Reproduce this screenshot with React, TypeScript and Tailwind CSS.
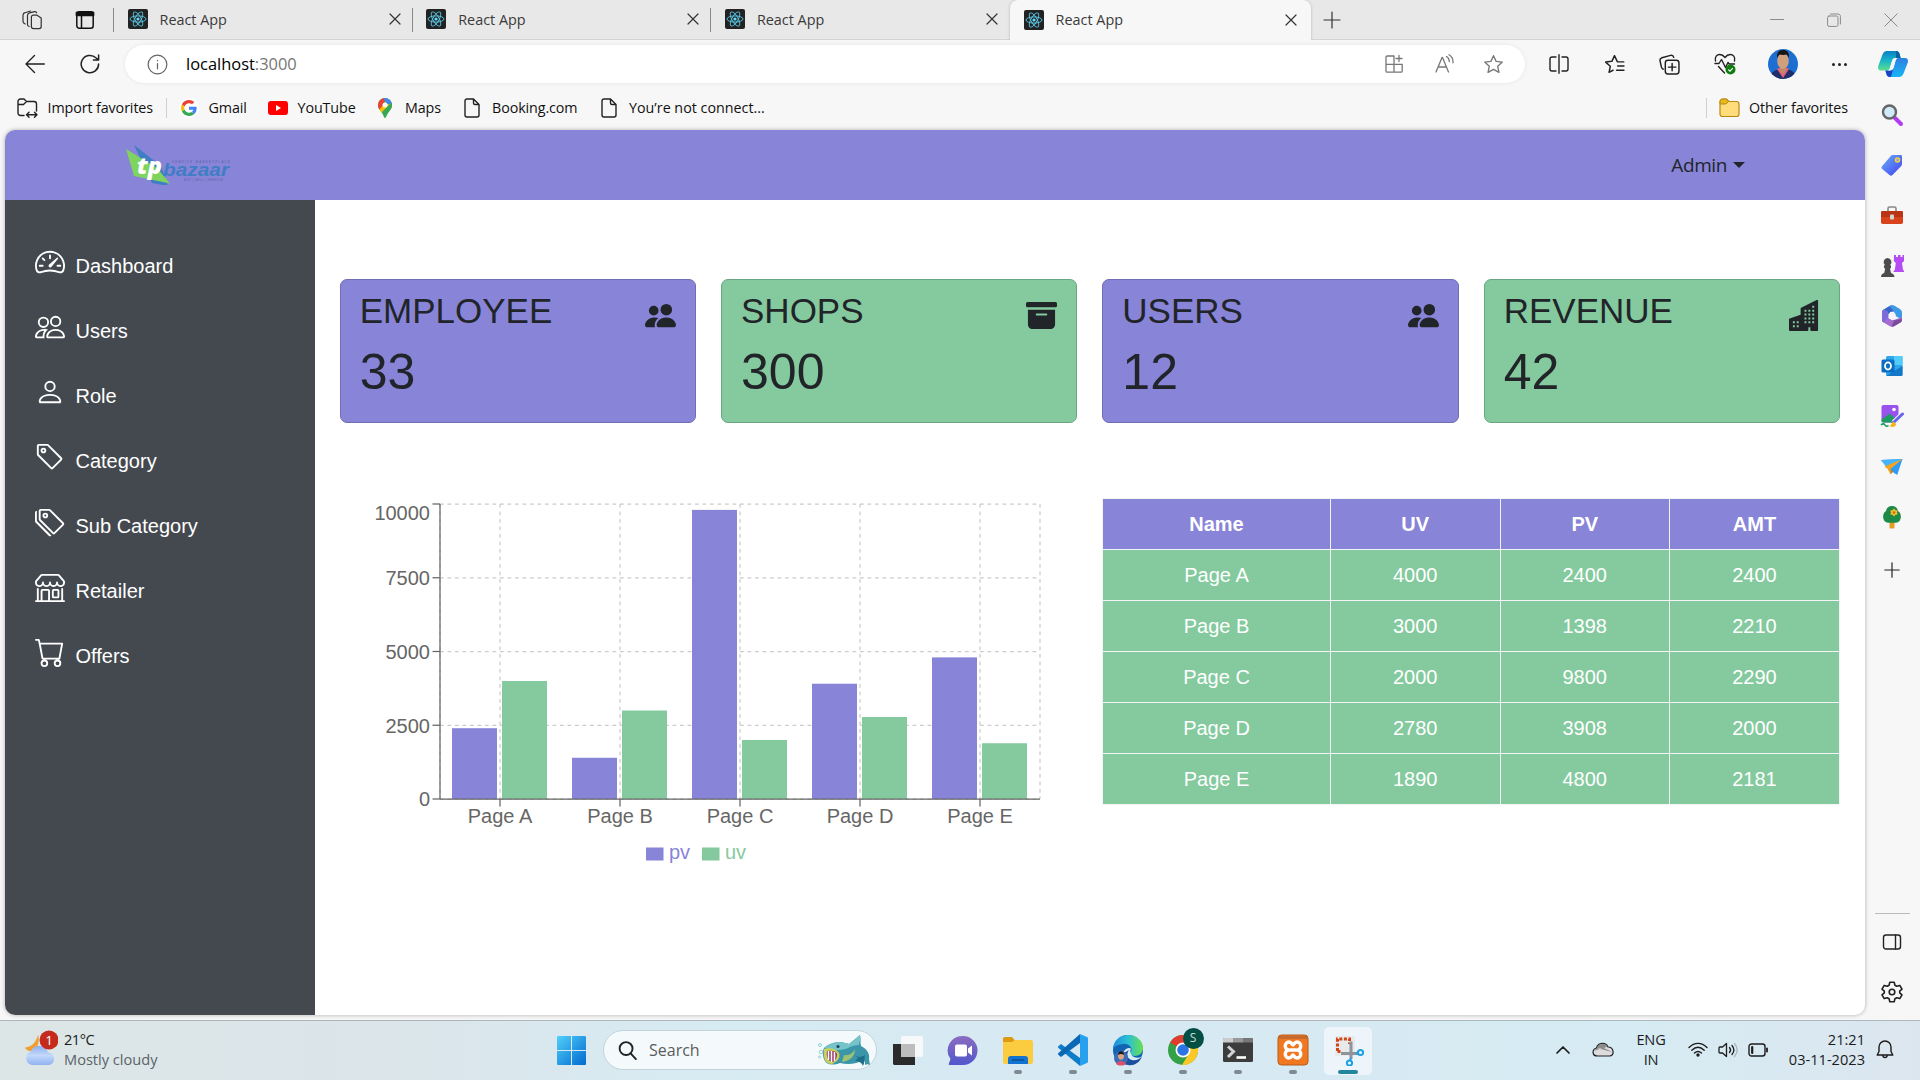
import React from "react";
import {
  BsSpeedometer2,
  BsPeople,
  BsPerson,
  BsTag,
  BsTags,
  BsShop,
  BsCart,
  BsPeopleFill,
  BsFillArchiveFill,
  BsBuildingsFill,
} from "react-icons/bs";

type IconProps = { className?: string; children?: React.ReactNode; vb?: string; sw?: number };

function Line({ className = "", children, vb = "0 0 20 20", sw = 1.3 }: IconProps) {
  return (
    <svg viewBox={vb} className={"shrink-0 " + className} fill="none" stroke="currentColor" strokeWidth={sw} strokeLinecap="round" strokeLinejoin="round">
      {children}
    </svg>
  );
}

function Art({ className = "", children, vb = "0 0 24 24" }: IconProps) {
  return (
    <svg viewBox={vb} className={"shrink-0 " + className} fill="none">
      {children}
    </svg>
  );
}

const STAR = "M10 1.6l2.5 5.4 5.9.7-4.4 4 1.2 5.8L10 14.6l-5.2 2.9L6 11.7l-4.4-4 5.9-.7z";

function ReactLogo() {
  return (
    <Art vb="0 0 20 20" className="size-5">
      <rect width="20" height="20" rx="2" fill="#222" />
      <g stroke="#5ac8e8" strokeWidth="0.9">
        <ellipse cx="10" cy="10" rx="8" ry="3.1" />
        <ellipse cx="10" cy="10" rx="8" ry="3.1" transform="rotate(60 10 10)" />
        <ellipse cx="10" cy="10" rx="8" ry="3.1" transform="rotate(120 10 10)" />
      </g>
      <circle cx="10" cy="10" r="1.6" fill="#61dafb" />
    </Art>
  );
}

function TabBody() {
  return (
    <>
      <ReactLogo />
      <span className="ml-3 w-[229px] whitespace-nowrap text-[14.4px] text-[#3a3a3a]">React App</span>
      <Line vb="0 0 12 12" className="size-3 text-[#333]" sw={1.2}>
        <path d="M1 1l10 10M11 1L1 11" />
      </Line>
    </>
  );
}

function TabStrip() {
  return (
    <div className="flex h-10 items-center border-b border-[#d4d4d4] bg-[#e8e8e8]">
      <Line className="ml-[22px] size-5 text-[#333]" sw={1.2}>
        <path d="M11.500 5.200h3.500L19.200 8v8.600a2 2 0 0 1-2 2h-5.800a2 2 0 0 1-2-2V7.200a2 2 0 0 1 2-2z" />
        <path d="M7.200 16.500c-1-.3-1.700-1-1.700-2V5.600c0-1.500.8-2.300 2-2.700l5-1.300c1-.2 1.900.2 2.200 1.300" />
        <path d="M3.200 14c-1.300-.5-2.200-1.200-2.200-2.400V5.200C1 3.900 1.800 3 3 2.700L8.500 1" />
      </Line>
      <Line className="ml-[33px] size-5 text-[#111]" sw={1.5}>
        <rect x="1.800" y="1.800" width="16.400" height="16.400" rx="2.500" />
        <path d="M2 4.800h16M2 3h16" strokeWidth="3" />
        <path d="M6.500 6v12" />
      </Line>
      <div className="ml-[18px] h-6 w-px bg-[#8a8a8a]" />
      {[0, 1, 2].map((i) => (
        <div key={i} className="flex h-full w-[298.700px] items-center">
          <div className="flex w-full items-center pl-[13.500px]">
            <TabBody />
          </div>
          {i < 2 && <div className="h-6 w-px shrink-0 bg-[#8a8a8a]" />}
        </div>
      ))}
      <div className="-mb-px flex h-10 w-[301px] items-center rounded-t-[8px] bg-[#f7f7f7] pl-[13.500px] shadow-[0_0_3px_rgba(0,0,0,0.22)] [clip-path:inset(0_-4px_0_-4px)]">
        <TabBody />
      </div>
      <Line className="ml-[12px] size-[18px] text-[#333]" vb="0 0 18 18" sw={1.2}>
        <path d="M9 1v16M1 9h16" />
      </Line>
      <div className="ml-auto flex items-center gap-[43px] pr-[22px] text-[#8a8a8a]">
        <Line vb="0 0 14 14" className="w-[14px]" sw={1}>
          <path d="M.5 6.500h13" />
        </Line>
        <Line vb="0 0 14 14" className="w-[14px]" sw={1}>
          <rect x=".6" y="3" width="10.400" height="10.400" rx="1.500" />
          <path d="M3.500 1h7.500c1.500 0 2.400 1 2.400 2.400V11" />
        </Line>
        <Line vb="0 0 14 14" className="w-[14px]" sw={1}>
          <path d="M.8.8l12.400 12.400M13.200.8L.8 13.200" />
        </Line>
      </div>
    </div>
  );
}

function Avatar() {
  return (
    <Art vb="0 0 30 30" className="size-[30px]">
      <clipPath id="av">
        <circle cx="15" cy="15" r="15" />
      </clipPath>
      <g clipPath="url(#av)">
        <rect width="30" height="30" fill="#1c6fd0" />
        <path d="M2 30c0-7 5-10 13-10s13 3 13 10z" fill="#1f2f6b" />
        <path d="M9 20l6 9 6-9-2-1h-8z" fill="#e8607a" />
        <path d="M12 17h6v5l-3 3-3-3z" fill="#c08a68" />
        <ellipse cx="15" cy="12" rx="5.800" ry="7.800" fill="#d0a07c" />
        <path d="M9.200 9c-1-5.500 2-8 5.800-8s6.800 2.500 5.800 8c-.7-2-1.300-3-2.300-3.500-2 .5-5 .5-7 0-1 .5-1.600 1.500-2.300 3.500z" fill="#1a1414" />
      </g>
    </Art>
  );
}

function Copilot() {
  return (
    <Art vb="0 0 30 28" className="h-7 w-[30px]">
      <defs>
        <linearGradient id="cp1" x1="0" y1="0" x2="0" y2="1">
          <stop offset="0" stopColor="#0a7fc4" />
          <stop offset=".5" stopColor="#19b5c9" />
          <stop offset="1" stopColor="#5fe08a" />
        </linearGradient>
        <linearGradient id="cp2" x1="0" y1="0" x2="0" y2="1">
          <stop offset="0" stopColor="#2f7fe0" />
          <stop offset="1" stopColor="#16b6f5" />
        </linearGradient>
      </defs>
      <path d="M9 1h9c2 0 3 1 3.600 3l1 4h-5c-2 0-3 1-3.600 3l-2 7c-.6 2-1.600 2.600-3.500 2.600H3C.6 20.600-.4 18.600.200 16L4.500 4.500C5.500 2 7 1 9 1z" fill="url(#cp1)" />
      <path d="M21 27h-9c-2 0-3-1-3.600-3l-1-3.600H12c2 0 3-1 3.600-3l2-6.800C18.200 8.600 19.200 8 21 8h6c2.500 0 3.400 2 2.800 4.500l-4.300 11C24.500 26 23 27 21 27z" fill="url(#cp2)" />
      <path d="M7.400 20.400H12c1.500 0 2.500-.6 3.200-1.800L13 27h-1c-2 0-3-1-3.600-3z" fill="#1b44c4" />
      <path d="M18 1c2 0 3 1 3.600 3l1 4H18z" fill="#0b5f9e" />
      <path d="M14 11c.6-2 1.600-3 3.600-3h3.400c-1.800 0-2.800.6-3.400 2.600l-2 6.800c-.6 2-1.600 3-3.600 3H9c1.500 0 2.400-.8 3-2.600z" fill="#f2f9fc" />
    </Art>
  );
}

function AddressRow() {
  return (
    <div className="flex h-[46px] items-center pt-0.5">
      <Line vb="0 0 20 20" className="ml-[25px] size-5 text-[#222]" sw={1.4}>
        <path d="M19.300 10H1M9.500 1.500L1 10l8.500 8.500" />
      </Line>
      <Line vb="0 0 20 20" className="ml-[35px] size-5 text-[#222]" sw={1.500}>
        <path d="M18.600 10a8.700 8.700 0 1 1-2.700-6.200L18 5.600M18.600 1v5h-5.200" />
      </Line>
      <div className="ml-[25px] flex h-[38px] w-[1400px] items-center rounded-full bg-white shadow-[0_0_4px_rgba(0,0,0,0.08)]">
        <Line vb="0 0 22 22" className="ml-[22px] size-[21px] text-[#666]" sw={1.300}>
          <circle cx="11" cy="11" r="9.800" />
          <path d="M11 10v5.500M11 6.600v.4" />
        </Line>
        <span className="ml-[18px] w-[1180px] whitespace-nowrap text-[16.450px] leading-none text-black">
          localhost<span className="text-[#767676]">:3000</span>
        </span>
        <Line className="ml-[18px] size-5 text-[#777]" sw={1.300}>
          <path d="M10 2H3.200C2.500 2 2 2.500 2 3.200V17c0 .7.500 1.200 1.200 1.200H17c.7 0 1.200-.5 1.200-1.200v-6.500M2 10.300h16M10 2v16M15 1.500v6M12 4.500h6" />
        </Line>
        <Line className="ml-[31px] size-5 text-[#777]" sw={1.300}>
          <path d="M1 18L7 3.500h.5L13.500 18M3 13h8.500M11.500 2.500c2 1.200 2.800 2.800 2.800 5M14 .8c3 1.700 4.300 4.500 4 8" />
        </Line>
        <Line className="ml-[28px] size-[21px] text-[#777]" sw={1.300}>
          <path d={STAR} />
        </Line>
      </div>
      <Line className="ml-[24px] size-5 text-[#222]" sw={1.400}>
        <path d="M7 3H3C1.800 3 1 3.800 1 5v10c0 1.200.8 2 2 2h4M13 3h4c1.200 0 2 .8 2 2v10c0 1.200-.8 2-2 2h-4M10 .8v18.400" />
      </Line>
      <Line className="ml-[35px] size-[21px] text-[#222]" sw={1.400}>
        <path d="M18.800 7.500h-6L10 1.600 7.500 7l-5.900.7 4.400 4-1.200 5.800 3.800-2M13 11.500h6M12 15.500h7" />
      </Line>
      <Line className="ml-[34px] size-[21px] text-[#222]" sw={1.400}>
        <rect x="6" y="6" width="13" height="13" rx="2.500" />
        <path d="M12.500 9v7M9 12.500h7M4 14.500C3 14 2.600 13.500 2.300 12.500L1 6.500c-.3-1.500.5-2.600 1.800-3L11 1.300c1.500-.3 2.700.4 3 1.900" />
      </Line>
      <Art vb="0 0 22 22" className="ml-[34px] size-[22px]">
        <g stroke="#222" strokeWidth="1.400" strokeLinecap="round" strokeLinejoin="round">
          <path d="M1.500 8C.5 3.500 3 1.500 5.800 1.500c2.200 0 3.700 1 5.200 3 1.500-2 3-3 5.200-3 2.800 0 5.300 2 4.300 6.500M4.500 13.500l6 6.500" />
          <path d="M1 10.500h4l2.500-4 4 8 2.500-5 1.200 1.500h5.300" />
        </g>
        <circle cx="16.500" cy="16.500" r="5" fill="#107c10" />
        <path d="M14.300 16.600l1.700 1.600 2.800-3" stroke="#fff" strokeWidth="1.200" />
      </Art>
      <div className="ml-[32px]">
        <Avatar />
      </div>
      <div className="ml-[34px] flex gap-[3px]">
        <i className="size-[3px] rounded-full bg-[#222]" />
        <i className="size-[3px] rounded-full bg-[#222]" />
        <i className="size-[3px] rounded-full bg-[#222]" />
      </div>
      <div className="ml-[31px]">
        <Copilot />
      </div>
    </div>
  );
}

function FileIcon({ className }: { className: string }) {
  return (
    <Line vb="0 0 16 20" className={"h-5 w-4 text-[#222] " + className} sw={1.400}>
      <path d="M9.500 1H3C1.800 1 1 1.800 1 3v14c0 1.200.8 2 2 2h10c1.200 0 2-.8 2-2V6.500zM9.500 1v4c0 1 .5 1.500 1.500 1.500h4" />
    </Line>
  );
}

function FavoritesBar() {
  const t = "whitespace-nowrap text-[14.300px] tracking-[-0.1px] text-[#111]";
  return (
    <div className="flex h-[44px] items-center">
      <Line vb="0 0 21 20" className="ml-[17px] h-5 w-[21px] text-[#222]" sw={1.400}>
        <path d="M7 17.500H3.500C2 17.500 1 16.500 1 15V3.500C1 2 2 1 3.500 1H7l2.500 2.500H17c1.500 0 2.500 1 2.500 2.500v7M1 6.500h5.500L9.500 3.500" />
        <path d="M9.500 16.800h10.500M12 14.300l-2.500 2.500 2.500 2.500M17.500 14.300l2.500 2.500-2.500 2.500" />
      </Line>
      <span className={"ml-[9.500px] w-[105px] " + t}>Import favorites</span>
      <div className="ml-[13.500px] h-5 w-px bg-[#cfcfcf]" />
      <div className="ml-[12px] flex size-5 items-center justify-center rounded-full bg-white">
        <Art vb="0 0 48 48" className="size-4">
          <path fill="#EA4335" d="M24 9.500c3.540 0 6.710 1.220 9.210 3.600l6.850-6.850C35.900 2.380 30.470 0 24 0 14.620 0 6.510 5.380 2.560 13.220l7.980 6.190C12.430 13.720 17.740 9.500 24 9.500z" />
          <path fill="#4285F4" d="M46.980 24.550c0-1.570-.15-3.090-.38-4.550H24v9.020h12.940c-.58 2.960-2.260 5.480-4.780 7.180l7.730 6c4.510-4.180 7.090-10.360 7.090-17.650z" />
          <path fill="#FBBC05" d="M10.530 28.590c-.48-1.450-.76-2.990-.76-4.590s.27-3.140.76-4.590l-7.980-6.190C.92 16.460 0 20.120 0 24c0 3.880.92 7.540 2.560 10.780l7.970-6.190z" />
          <path fill="#34A853" d="M24 48c6.480 0 11.930-2.130 15.890-5.810l-7.730-6c-2.150 1.450-4.920 2.300-8.160 2.300-6.260 0-11.570-4.220-13.470-9.910l-7.980 6.190C6.510 42.620 14.620 48 24 48z" />
        </Art>
      </div>
      <span className={"ml-[9.500px] w-[50px] " + t}>Gmail</span>
      <Art vb="0 0 20 14" className="ml-[9px] h-[14px] w-5">
        <rect width="20" height="14" rx="3" fill="#f00" />
        <path d="M8 4l5 3-5 3z" fill="#fff" />
      </Art>
      <span className={"ml-[10px] w-[58px] " + t}>YouTube</span>
      <Art vb="0 0 14 20" className="ml-[22px] h-5 w-[14px]">
        <clipPath id="pin">
          <path d="M7 0a7 7 0 0 0-7 7c0 3 1.500 4.500 3 6.500C5 16 5.500 17.500 6 19c.3 1 1.700 1 2 0 .5-1.500 1-3 3-5.500 1.500-2 3-3.500 3-6.500a7 7 0 0 0-7-7z" />
        </clipPath>
        <g clipPath="url(#pin)">
          <rect width="14" height="20" fill="#34a853" />
          <path d="M0 12L14-3v10L2 17z" fill="#fbbc04" />
          <path d="M0 0h7l-1 6-5 6-3-5z" fill="#ea4335" />
          <path d="M4 -2h12v9L9 6z" fill="#4285f4" />
          <path d="M14 4v9l-7 8-3-7z" fill="#34a853" />
        </g>
        <circle cx="7" cy="7" r="2.500" fill="#fff" />
      </Art>
      <span className={"ml-[13.500px] w-[38px] " + t}>Maps</span>
      <FileIcon className="ml-[21px]" />
      <span className={"ml-[12px] w-[88px] " + t}>Booking.com</span>
      <FileIcon className="ml-[21px]" />
      <span className="ml-[12px] w-[140px] whitespace-nowrap text-[14.300px] text-[#111]">You’re not connect...</span>
      <div className="ml-auto h-5 w-px bg-[#cfcfcf]" />
      <Art vb="0 0 21 20" className="ml-[12px] h-5 w-[21px]">
        <path d="M1 4c0-1.700 1-3 3-3h3.500L10 3.500h7.500c1.500 0 2.500 1 2.500 2.500v10c0 1.500-1 2.500-2.500 2.500h-14C2 18.500 1 17.500 1 16z" fill="#ffdc7c" stroke="#b98a10" strokeWidth="1.200" />
        <path d="M1 6V4c0-1.700 1-3 3-3h3L9.500 3.500 7 6z" fill="#e9b91c" stroke="#b98a10" strokeWidth="1" />
      </Art>
      <span className={"mr-[72px] ml-[9px] w-[99px] " + t}>Other favorites</span>
    </div>
  );
}

function Logo() {
  return (
    <Art vb="0 0 106 40" className="h-10 w-[106px]">
      <path d="M8 0l27 21 7 20-16-3z" fill="#3f7ec4" />
      <path d="M0 4l31 19 13 15.500L8 31z" fill="#7ed45c" />
      <text x="11" y="29" fontFamily="Open Sans" fontWeight="800" fontStyle="italic" fontSize="23" textLength="25" lengthAdjust="spacingAndGlyphs" fill="#fff">tp</text>
      <text x="37" y="31" fontFamily="Liberation Sans" fontWeight="700" fontStyle="italic" fontSize="17.500" textLength="66" lengthAdjust="spacingAndGlyphs" fill="#3f7ec4">bazaar</text>
      <text x="46" y="18" fontFamily="Liberation Sans" fontSize="3" textLength="58" fill="#5d62a8">SERVICE MARKETPLACE</text>
      <text x="58" y="35.500" fontFamily="Liberation Sans" fontSize="3" textLength="39" fill="#5d62a8">BUY | SELL | SERVICE</text>
    </Art>
  );
}

const NAV = [
  { label: "Dashboard", Icon: BsSpeedometer2 },
  { label: "Users", Icon: BsPeople },
  { label: "Role", Icon: BsPerson },
  { label: "Category", Icon: BsTag },
  { label: "Sub Category", Icon: BsTags },
  { label: "Retailer", Icon: BsShop },
  { label: "Offers", Icon: BsCart },
];

const STATS = [
  { label: "EMPLOYEE", value: "33", Icon: BsPeopleFill, bg: "bg-[#8884d8] border-[#706db2]" },
  { label: "SHOPS", value: "300", Icon: BsFillArchiveFill, bg: "bg-[#84ca9e] border-[#6ba682]" },
  { label: "USERS", value: "12", Icon: BsPeopleFill, bg: "bg-[#8884d8] border-[#706db2]" },
  { label: "REVENUE", value: "42", Icon: BsBuildingsFill, bg: "bg-[#84ca9e] border-[#6ba682]" },
];

const DATA = [
  { name: "Page A", uv: 4000, pv: 2400, amt: 2400 },
  { name: "Page B", uv: 3000, pv: 1398, amt: 2210 },
  { name: "Page C", uv: 2000, pv: 9800, amt: 2290 },
  { name: "Page D", uv: 2780, pv: 3908, amt: 2000 },
  { name: "Page E", uv: 1890, pv: 4800, amt: 2181 },
];

const TICKS = [
  { v: 0, ty: 308 },
  { v: 2500, ty: 235 },
  { v: 5000, ty: 161 },
  { v: 7500, ty: 87 },
  { v: 10000, ty: 22 },
];

function Chart() {
  const x0 = 100;
  const y0 = 301;
  const h = 295;
  const dash = "3.75 3.75";
  return (
    <svg width="738" height="375" viewBox="0 0 738 375" fontFamily="Liberation Sans" fontSize="20" fill="#666" className="block">
      <g stroke="#ccc" strokeWidth="1.250" strokeDasharray={dash}>
        {TICKS.map((t) => (
          <path key={t.v} d={`M${x0} ${y0 - (t.v / 10000) * h}h600`} />
        ))}
        {[0, 60, 180, 300, 420, 540, 600].map((x) => (
          <path key={x} d={`M${x0 + x} 6v${h}`} />
        ))}
      </g>
      {DATA.map((d, i) => (
        <g key={d.name}>
          <rect x={x0 + i * 120 + 12} y={y0 - (d.pv / 10000) * h} width="45" height={(d.pv / 10000) * h} fill="#8884d8" />
          <rect x={x0 + i * 120 + 62} y={y0 - (d.uv / 10000) * h} width="45" height={(d.uv / 10000) * h} fill="#84ca9e" />
          <path d={`M${x0 + 60 + i * 120} ${y0}v7.500`} stroke="#666" strokeWidth="1.250" />
          <text x={x0 + 60 + i * 120} y="325" textAnchor="middle">{d.name}</text>
        </g>
      ))}
      <path d={`M${x0} 6v${h}M${x0} ${y0}h600`} stroke="#666" strokeWidth="1.250" />
      {TICKS.map((t) => (
        <g key={t.v}>
          <path d={`M${x0 - 7.5} ${y0 - (t.v / 10000) * h}h7.500`} stroke="#666" strokeWidth="1.250" />
          <text x="90" y={t.ty} textAnchor="end">{t.v}</text>
        </g>
      ))}
      <rect x="306" y="349.500" width="17.500" height="13" fill="#8884d8" />
      <text x="329" y="361" fill="#8884d8">pv</text>
      <rect x="362" y="349.500" width="17.500" height="13" fill="#84ca9e" />
      <text x="385" y="361" fill="#84ca9e">uv</text>
    </svg>
  );
}

function DataTable() {
  const cell = "border border-[#f3f4f6] h-[51px] p-0 text-center align-middle";
  return (
    <table className="w-[738px] table-fixed border-collapse text-[20px] leading-[30px] text-white">
      <colgroup>
        <col className="w-[228px]" />
        <col className="w-[169.500px]" />
        <col className="w-[169.500px]" />
        <col />
      </colgroup>
      <thead>
        <tr className="bg-[#8884d8]">
          {["Name", "UV", "PV", "AMT"].map((h) => (
            <th key={h} className={cell + " font-bold"}>{h}</th>
          ))}
        </tr>
      </thead>
      <tbody>
        {DATA.map((d) => (
          <tr key={d.name} className="bg-[#84ca9e]">
            <td className={cell}>{d.name}</td>
            <td className={cell}>{d.uv}</td>
            <td className={cell}>{d.pv}</td>
            <td className={cell}>{d.amt}</td>
          </tr>
        ))}
      </tbody>
    </table>
  );
}

function WebPage() {
  return (
    <div className="flex h-[885px] w-[1860px] flex-col overflow-hidden rounded-[10px] bg-white font-['Liberation_Sans',sans-serif] shadow-[0_0_4px_rgba(0,0,0,0.3)]">
      <header className="flex h-[70px] shrink-0 items-center justify-between bg-[#8884d8] pr-[120px] pl-[121px]">
        <Logo />
        <div className="flex items-center gap-[6px] font-['Open_Sans',sans-serif] text-[19px] tracking-[-0.400px] text-[#212529]">
          Admin
          <i className="size-0 border-x-[6px] border-t-[6px] border-x-transparent border-t-[#212529]" />
        </div>
      </header>
      <div className="flex min-h-0 flex-1">
        <nav className="w-[310px] bg-[#444950] pt-[32px] pl-[30px] text-[20px] text-white">
          {NAV.map(({ label, Icon }) => (
            <div key={label} className="flex h-[65px] items-center">
              <Icon className="-mt-[6px] size-[30px]" />
              <span className="mt-0.5 ml-[10.500px]">{label}</span>
            </div>
          ))}
        </nav>
        <main className="flex-1 pt-[79px] pr-[25px] pl-[24.700px]">
          <div className="grid grid-cols-4 gap-[25px] text-[#212529]">
            {STATS.map(({ label, value, Icon, bg }) => (
              <section key={label} className={"h-[144px] rounded-[7px] border px-[19px] pt-[10px] " + bg}>
                <div className="flex justify-between">
                  <h3 className="text-[35px] leading-[42px]">{label}</h3>
                  <Icon className="mt-[10px] size-[31px]" />
                </div>
                <p className="mt-[10px] text-[50px] leading-[60px]">{value}</p>
              </section>
            ))}
          </div>
          <div className="mt-[75px] flex items-start justify-between">
            <Chart />
            <DataTable />
          </div>
        </main>
      </div>
    </div>
  );
}

function EdgeSidebar() {
  const c = "size-6";
  return (
    <aside className="flex w-[55px] flex-col items-center pr-px">
      <div className="-mt-[27px] flex flex-col items-center gap-[26.200px]">
        <Art className={c}>
          <path d="M15 15l6 6" stroke="#b43cf0" strokeWidth="4" strokeLinecap="round" />
          <circle cx="9.500" cy="9" r="6.500" fill="#cfeafb" stroke="#666" strokeWidth="2.400" />
        </Art>
        <Art className={c}>
          <defs>
            <linearGradient id="tg" x1="0" y1="0" x2="1" y2="1">
              <stop offset="0" stopColor="#6ab0f8" />
              <stop offset="1" stopColor="#4040f0" />
            </linearGradient>
          </defs>
          <path d="M13 2h7.500c1 0 1.500.5 1.500 1.500V11c0 .8-.3 1.300-.8 1.900L12.500 22c-1 1-2 1-3 0L2.200 16c-1-1-.9-2 0-3l8.600-10C11.500 2.300 12 2 13 2z" fill="url(#tg)" />
          <circle cx="17.500" cy="7" r="2" fill="#7d9ff0" stroke="#fbd23c" strokeWidth="1.500" />
        </Art>
        <Art className={c}>
          <path d="M8 8V5.500C8 4.600 8.500 4 9.500 4h5c1 0 1.500.6 1.500 1.500V8" stroke="#888" strokeWidth="1.600" />
          <rect x="1" y="8" width="22" height="13" rx="1.800" fill="#d8431c" />
          <path d="M1 9.500C1 8.500 1.800 8 2.500 8h19c.8 0 1.500.5 1.500 1.500V14H1z" fill="#b93414" />
          <rect x="10" y="11.500" width="4" height="5" rx="1" fill="#d4d4d4" />
        </Art>
        <Art className={c}>
          <path d="M14 1h2v2h2V1h2.500v2h2V1H24v6l-2 2 1 7c1 .5 1.300 1 1.300 2H13.500c0-1 .3-1.500 1.300-2l1-7-2-2z" fill="#b44cf4" />
          <path d="M7.500 4a4 4 0 0 1 2.800 6.800L11 12v2l-1 .5 1 4.500c1.500.7 3.500 1.500 3.500 4H1c0-2.500 1.500-3.300 3.200-4l1-4.500L4 14v-2l.8-1.200A4 4 0 0 1 7.500 4z" fill="#4c4c4c" />
        </Art>
        <Art className={c}>
          <path d="M9.500 2c1.500-1 3.500-1 5 0l5.500 3.200-1 5.800-5-3.500-4 .5-1.500 6.500L2 17V8.500C2 7 2.500 6 4 5.200z" fill="#3568c8" />
          <path d="M9.500 2c1.500-1 3.500-1 5 0l5.500 3.200c1.500.8 2 1.800 2 3.300v7L15.500 12 14 7.500z" fill="#3f9ae6" />
          <path d="M2 9l6-1.500L8.500 14l5.500 2 8-3v2.500c0 1.500-.5 2.500-2 3.300L14.500 22c-1.500 1-3.500 1-5 0L4 18.800C2.500 18 2 17 2 15.500z" fill="#a46cd0" />
          <path d="M2 8.500c0-1.500.5-2.500 2-3.300L8 8v6l-4.500 4.500C2.500 18 2 17 2 15.500z" fill="#7a6cdc" />
          <path d="M14 16.500l8-1.500c0 2-.5 3-2 3.800L14.500 22c-1 .7-2 .8-3 .7z" fill="#7c4a9c" />
          <path d="M12 8l3.600 2v4L12 16.200 8.400 14v-4z" fill="#f7f7f7" />
        </Art>
        <Art className={c}>
          <rect x="6" y="2" width="16.500" height="20" rx="1.500" fill="#2ea8ea" />
          <path d="M14 2h8.500v9H14z" fill="#52ccfb" />
          <path d="M6 22l16.500-10v8.500c0 1-.6 1.500-1.500 1.500z" fill="#1478c8" />
          <rect x="1.500" y="5.500" width="13" height="13" rx="1.500" fill="#0b6cc4" />
          <ellipse cx="8" cy="12" rx="3" ry="3.600" stroke="#fff" strokeWidth="1.800" />
        </Art>
        <Art className={c}>
          <rect x="1.500" y="1" width="17" height="17.500" rx="2" fill="#9a52ec" />
          <path d="M1.500 15.500l8-6 7 6-2 3H3.500c-1.500 0-2-1-2-2z" fill="#1c9c64" />
          <circle cx="14" cy="5.500" r="1.800" fill="#fff" />
          <path d="M13.500 18.500L22.500 10" stroke="#f7f7f7" strokeWidth="5" />
          <path d="M13.500 18.500L22.500 10" stroke="#6464f0" strokeWidth="3" strokeLinecap="round" />
          <path d="M9.500 22c2-.5 2-3.500 4-4.500l2.600 2.600c0 3-4 4-6.600 1.900z" fill="#f5b21c" />
          <path d="M1 21c2-2 3.500-1 4 0s2 1.800 3.500.5" stroke="#1c9c64" strokeWidth="1.600" />
        </Art>
        <Art className={c}>
          <path d="M1 6l21.500-1-5.300 16-6-4z" fill="#2e9cf4" />
          <path d="M1 6l21.500-1L7 14z" fill="#46b4fa" />
          <path d="M4.500 12.500L22.500 5 10.500 15v5.500L7.500 14.800z" fill="#f3a41e" />
          <path d="M10.500 15.500l2.800 2-2.800 3z" fill="#c87812" />
        </Art>
        <Art className={c}>
          <rect x="9.500" y="16" width="5" height="7.500" rx=".8" fill="#e89c28" />
          <path d="M12 1c4 0 5.500 2.500 6 5 2.500 1.500 3.500 5 2.500 8-.8 2.500-2.500 3.700-5 3.700h-7c-2.500 0-4.200-1.200-5-3.700-1-3 0-6.500 2.500-8 .5-2.500 2-5 6-5z" fill="#1e8a48" />
          <path d="M14 3.500l1.500 1.800 2.200.2-.7 2 .7 2-2.200.3L14 11.500l-1.500-1.700-2.200-.3.700-2-.7-2 2.200-.2z" fill="#f4c02c" />
          <circle cx="14" cy="7.500" r="1.300" fill="#d8661c" />
        </Art>
      </div>
      <Line vb="0 0 16 16" className="mt-[33px] size-4 text-[#222]" sw={1.200}>
        <path d="M8 .8v14.400M.8 8h14.400" />
      </Line>
      <div className="mt-auto h-px w-[35px] bg-[#bbb]" />
      <Line className="mt-[18px] size-5 text-[#222]" sw={1.400}>
        <rect x="1.500" y="3" width="17" height="14" rx="2.500" />
        <path d="M13.500 3v14" />
      </Line>
      <Line vb="0 0 24 24" className="mt-[28px] mb-[16px] size-6 text-[#222]" sw={1.600}>
        <path d="M9.800 2.200h4.400l.7 3 1.900 1.100 3-.9 2.200 3.700-2.300 2.100v1.600l2.300 2.100-2.200 3.700-3-.9-1.900 1.100-.7 3H9.800l-.7-3-1.900-1.100-3 .9L2 14.900l2.300-2.100v-1.600L2 9.100l2.200-3.700 3 .9 1.900-1.100z" />
        <circle cx="12" cy="12" r="2.800" />
      </Line>
    </aside>
  );
}

function TaskIcon({ children, mark = true }: { children: React.ReactNode; mark?: boolean }) {
  return (
    <div className="flex h-12 w-[55px] flex-col items-center pt-[7px]">
      {children}
      {mark && <i className="mt-1 h-1 w-2 rounded-full bg-[#7e8a90]" />}
    </div>
  );
}

function Taskbar() {
  const k = "size-8";
  return (
    <footer className="flex h-[60px] items-center border-t border-[#adb8be] bg-[linear-gradient(90deg,#dde6e6_0%,#dbe5ea_20%,#d7ebf3_38%,#d7e9f2_60%,#d6ebf3_85%,#dce6ef_100%)] text-[14.600px] text-[#1c1c1c]">
      <Art vb="0 0 34 36" className="-mt-[5px] ml-[24px] h-9 w-[34px]">
        <defs>
          <linearGradient id="cl" x1="0" y1="0" x2="0" y2="1">
            <stop offset="0" stopColor="#8fb0ee" />
            <stop offset=".5" stopColor="#c3d8fb" />
            <stop offset="1" stopColor="#8fb2f0" />
          </linearGradient>
        </defs>
        <path d="M14 5c2 5 0 13-4 16H5c-2-1-3.500-2-4-3.500C8 17 12 12 14 5z" fill="#f0a030" />
        <path d="M8 35a7 7 0 0 1-1-13.500C8 18 11 16 15 16s8 2 9 6.500A6.300 6.300 0 0 1 25 35z" fill="url(#cl)" />
        <circle cx="25" cy="10" r="9.500" fill="#c42b1c" />
        <text x="25" y="15" textAnchor="middle" fontFamily="Open Sans" fontSize="13.500" fill="#fff">1</text>
      </Art>
      <div className="-mt-1 ml-[6px] w-[110px] leading-5 whitespace-nowrap">
        <div className="tracking-[-0.500px]">21°C</div>
        <div className="text-[#5a6368]">Mostly cloudy</div>
      </div>
      <Art vb="0 0 29 29" className="ml-[383px] size-[29px]">
        <defs>
          <linearGradient id="win" x1="0" y1="0" x2="1" y2="1">
            <stop offset="0" stopColor="#4fd0fa" />
            <stop offset="1" stopColor="#0369cf" />
          </linearGradient>
        </defs>
        <path d="M1.500 0H14v14H0V1.500C0 .5.500 0 1.500 0zM15 0h12.500c1 0 1.500.5 1.500 1.500V14H15zM0 15h14v14H1.500C.5 29 0 28.500 0 27.500zM15 15h14v12.500c0 1-.5 1.500-1.500 1.500H15z" fill="url(#win)" />
      </Art>
      <div className="-mt-px ml-[17px] flex h-[40px] w-[274px] items-center rounded-full border border-[#c3d2dc] bg-[#f4f9fc] text-[16px] text-[#5c5c5c]">
        <Line className="ml-[14px] size-[19px] text-[#222]" sw={2}>
          <circle cx="8.500" cy="8" r="6.800" />
          <path d="M13.300 13l5.500 6" />
        </Line>
        <span className="ml-[12px] w-[169px]">Search</span>
        <Art vb="0 0 54 32" className="h-8 w-[54px]">
          <path d="M6 14C12 8 22 7 31 10l11-9c1 4 0 8 1 11 6 3 9 8 8 13l1 6c-2-1-3-1-5 0 0-3 0-4-2-5-6 4-15 5-23 3-8 3-14 1-15-2-2-3-3-9-1-13z" fill="#3b96aa" />
          <path d="M6 14c7-6 16-7 25-4l11-9c1 4-1 8-1 10-8 0-12 5-20 5-5 0-9 0-15-2z" fill="#74c4c8" />
          <path d="M6 15c6-2 13 0 15 4 2 6-3 9-7 11-7 0-9-6-8-15z" fill="#c9d35a" />
          <path d="M9 17c4-1 10 0 10 3 0 5-2 8-5 8-4-1-6-5-5-11z" fill="#9c3a6c" />
          <path d="M10.500 17v9M13.500 17v11M16.500 18v9" stroke="#fff" strokeWidth="1.500" />
          <circle cx="20" cy="12.500" r="1.600" fill="#23406a" />
          <path d="M26 21c5 1 9-2 11-6 0 8-6 12-13 13" fill="#c9d35a" opacity=".7" />
          <path d="M36 21c4 3 8 2 11 0-1 4 0 7-2 11-1-3-4-5-8-5l3-3z" fill="#1d6f88" />
          <circle cx="2" cy="11" r="1.500" stroke="#8fd0e0" />
          <circle cx="3" cy="18" r="1.800" stroke="#8fd0e0" />
          <circle cx="1.500" cy="23" r="1" stroke="#8fd0e0" />
        </Art>
      </div>
      <div className="ml-[3px] flex items-center">
        <TaskIcon mark={false}>
          <Art vb="0 0 32 32" className={k}>
            <path d="M1 10h22v21H3c-1.500 0-2-.5-2-2z" fill="#2b2b2b" />
            <rect x="9" y="2" width="22" height="21" rx="1.500" fill="#fafafa" fillOpacity=".9" />
            <path d="M9 10h14v13H9z" fill="#bdbdbd" />
          </Art>
        </TaskIcon>
        <TaskIcon mark={false}>
          <Art vb="0 0 32 32" className={k}>
            <defs>
              <linearGradient id="ch" x1="0" y1="0" x2="0" y2="1">
                <stop offset="0" stopColor="#8c6cc0" />
                <stop offset="1" stopColor="#5058cc" />
              </linearGradient>
            </defs>
            <path d="M16 2a14.500 14.500 0 1 1 0 29H2.500c-.8 0-1-.6-.7-1.300L3.500 25A14.500 14.500 0 0 1 16 2z" fill="url(#ch)" />
            <rect x="8" y="10.500" width="12" height="12" rx="2" fill="#fff" />
            <path d="M21 14.500l4-3v10l-4-3z" fill="#fff" />
          </Art>
        </TaskIcon>
        <TaskIcon>
          <Art vb="0 0 32 32" className={k}>
            <path d="M1 5c0-1.300.7-2 2-2h7l3 3.500-3 3H1z" fill="#dd9a10" />
            <path d="M1 8h9l3-2h16c1.300 0 2 .7 2 2v20c0 1.300-.7 2-2 2H3c-1.300 0-2-.7-2-2z" fill="#fccc40" />
            <path d="M6 30v-5c0-1.800 1-3 3-3h14c2 0 3 1.200 3 3v5z" fill="#1273d0" />
            <path d="M10 26h12" stroke="#0b4d94" strokeWidth="1.500" />
          </Art>
        </TaskIcon>
        <TaskIcon>
          <Art vb="0 0 32 32" className={k}>
            <path d="M1 12.500l3-2.500L23 24v8L1.500 14c-.5-.5-.8-1-.5-1.500z" fill="#0f7cc8" />
            <path d="M1 20.500L4 23 23 9V0L1.500 19c-.5.500-.8 1-.5 1.500z" fill="#0a68b4" />
            <path d="M23 0l7 3c.8.400 1 1 1 1.800v22.400c0 .8-.2 1.400-1 1.800l-7 3z" fill="#28a0f0" />
          </Art>
        </TaskIcon>
        <TaskIcon>
          <Art vb="0 0 32 32" className={k}>
            <defs>
              <linearGradient id="ed" x1="0" y1="0" x2="1" y2="0">
                <stop offset="0" stopColor="#1c8cdc" />
                <stop offset=".5" stopColor="#2cc0d4" />
                <stop offset="1" stopColor="#6ae04c" />
              </linearGradient>
            </defs>
            <circle cx="16" cy="16" r="15" fill="#1264b4" />
            <path d="M1 15C2 6 8 1 16 1c9 0 15 6 15 13 0 5-4 8-8 8-3 0-5-1-5-2.500 0-1 1.500-2 1.500-4C19.500 12 16 10 12 10 6 10 2 13 1 15z" fill="url(#ed)" />
            <path d="M19 20c1 3 6 5 11 3-3 6-8 8-13 8-5-2-8-8-5-14 2-3 6-4 7-2-1 1-1 3 0 5z" fill="#d9ebf4" />
            <path d="M17 16c-3 4-2 9 3 10 4 1 7-1 10-3-3 6-8 9-14 8-5-2-6-8-4-12z" fill="#1a4fa0" />
            <circle cx="9" cy="24" r="7" fill="#3a6cb4" />
            <ellipse cx="9" cy="22" rx="3" ry="3.700" fill="#d8a684" />
            <path d="M6 21c0-5 6-5 6 0-2-1.500-4-1.500-6 0z" fill="#221818" />
            <path d="M4 30c1-4 9-4 10 0-3 2-7 2-10 0z" fill="#d8506c" />
          </Art>
        </TaskIcon>
        <TaskIcon>
          <div className="relative">
            <Art vb="0 0 32 32" className={k}>
              <circle cx="16" cy="16" r="15" fill="#34a048" />
              <path d="M16 16L3 8.500A15 15 0 0 1 29 8.500z" fill="#e03c30" />
              <path d="M16 1a15 15 0 0 1 13 7.500H16z" fill="#e03c30" />
              <path d="M29 8.500A15 15 0 0 1 15 31l7-11.500V8.500z" fill="#fcc828" />
              <circle cx="16" cy="16" r="7.500" fill="#fff" />
              <circle cx="16" cy="16" r="5.800" fill="#2c74e4" />
            </Art>
            <span className="absolute -top-[6px] -right-[5px] flex size-[21px] items-center justify-center rounded-full bg-[#044f44] text-[12px] leading-none text-[#c8dcd8]">S</span>
          </div>
        </TaskIcon>
        <TaskIcon>
          <Art vb="0 0 32 32" className={k}>
            <rect x="1" y="4" width="30" height="24" rx="1.500" fill="#3c3c3c" />
            <path d="M2.500 4H11v4.500H1V5.500C1 4.500 1.500 4 2.500 4z" fill="#ccc" />
            <path d="M11 4h10v4.500H11z" fill="#999" />
            <path d="M21 4h8.500c1 0 1.500.5 1.500 1.500v3H21z" fill="#777" />
            <path d="M6 12.500l5.500 5L6 23" stroke="#d4d4d4" strokeWidth="3" />
            <path d="M14.500 23.500H24" stroke="#fff" strokeWidth="2.600" />
          </Art>
        </TaskIcon>
        <TaskIcon>
          <Art vb="0 0 32 32" className={k}>
            <rect x="1" y="1" width="30" height="30" rx="3.500" fill="#f07820" stroke="#b85a18" strokeWidth="1" />
            <path d="M2 4c0-1.500.8-2 2-2h24c1.200 0 2 .5 2 2v1H2z" fill="#c86a30" />
            <path d="M12 16c-5 0-5-8 0-8 3 0 3 3 4 3s1-3 4-3c5 0 5 8 0 8 5 0 5 8 0 8-3 0-3-3-4-3s-1 3-4 3c-5 0-5-8 0-8zM13 16h6" stroke="#fff" strokeWidth="3.400" strokeLinejoin="round" />
          </Art>
        </TaskIcon>
        <div className="ml-[4px] flex size-[48px] flex-col items-center rounded-[5px] bg-[#edf5fa] pt-[7px]">
          <Art vb="0 0 32 32" className={k}>
            <rect x="3" y="2" width="20" height="20" rx="2" fill="#e9e9ec" />
            <path d="M5.500 17V5h12v5" stroke="#d04518" strokeWidth="3" strokeDasharray="3 1.600" />
            <path d="M5.500 17.500H10" stroke="#d04518" strokeWidth="3" strokeDasharray="3 1.600" />
            <path d="M19 7.500V25M9 19.500h17" stroke="#8c949c" strokeWidth="3" />
            <circle cx="28.500" cy="18.500" r="2.600" stroke="#1ca0e4" strokeWidth="2" />
            <circle cx="17.500" cy="29" r="2.600" stroke="#1ca0e4" strokeWidth="2" />
            <path d="M19 24l-1 3M24 19.500l2.500-.5" stroke="#1ca0e4" strokeWidth="2" />
          </Art>
          <i className="mt-1 h-1 w-5 rounded-full bg-[#22869c]" />
        </div>
      </div>
      <Line vb="0 0 14 8" className="-mt-0.5 ml-auto h-2 w-[14px]" sw={1.700}>
        <path d="M1 7l6-6 6 6" />
      </Line>
      <Art vb="0 0 22 15" className="-mt-0.5 ml-[22px] h-[15px] w-[22px]">
        <path d="M5.500 14C-.5 14 0 7 4.500 6 6 0 14 0 16 5c6 0 7 9 1.500 9z" fill="#dcdcdc" stroke="#222" strokeWidth="1.200" />
        <path d="M5 6c2-6 9-5 10.500-1.500L12 6l8 4M5 6l-3 3 8-3" fill="#8c8c8c" />
      </Art>
      <div className="-mt-[3px] ml-[22px] w-[30px] text-center leading-5 tracking-[-0.2px]">
        <div>ENG</div>
        <div>IN</div>
      </div>
      <Line vb="0 0 20 15" className="-mt-0.5 ml-[22px] h-[15px] w-5" sw={1.400}>
        <path d="M1 5.500c5.500-5.500 12.500-5.500 18 0M3.800 8.300c4-3.800 8.400-3.800 12.400 0M6.500 11c2.300-2.100 4.700-2.100 7 0" />
        <circle cx="10" cy="13" r="1" fill="currentColor" />
      </Line>
      <Line vb="0 0 20 16" className="-mt-0.5 ml-[10px] h-4 w-5" sw={1.300}>
        <path d="M8.500 1.500v13L4.500 11H2c-.6 0-1-.4-1-1V6c0-.6.4-1 1-1h2.500zM11.500 5.500c1.300 1.500 1.300 3.500 0 5M14 3.500c2.300 2.700 2.300 6.300 0 9" />
        <path d="M16.500 1.500c3.300 4 3.300 9 0 13" stroke="#a9b6bc" />
      </Line>
      <Line vb="0 0 20 14" className="-mt-0.5 ml-[10px] h-[14px] w-5" sw={1.400}>
        <rect x="1" y="1" width="16" height="12" rx="2.500" />
        <path d="M4.200 4v6" strokeWidth="2.200" />
        <path d="M19 5.500v3" strokeWidth="1.800" />
      </Line>
      <div className="-mt-[4px] ml-[17px] w-[80px] text-right leading-5">
        <div>21:21</div>
        <div className="whitespace-nowrap">03-11-2023</div>
      </div>
      <Line vb="0 0 18 19" className="-mt-0.5 mr-[26px] ml-[11px] h-[19px] w-[18px]" sw={1.400}>
        <path d="M9 1a6 6 0 0 0-6 6v4.500L1.200 15h15.600L15 11.500V7a6 6 0 0 0-6-6zM6.800 15.500c.3 2.700 4.100 2.700 4.400 0" />
      </Line>
    </footer>
  );
}

export default function App() {
  return (
    <div className="flex h-[1080px] w-[1920px] flex-col overflow-hidden bg-[#f7f7f7] font-['Open_Sans',sans-serif]">
      <TabStrip />
      <AddressRow />
      <FavoritesBar />
      <div className="flex h-[890px] shrink-0 pl-[5px]">
        <WebPage />
        <EdgeSidebar />
      </div>
      <Taskbar />
    </div>
  );
}
